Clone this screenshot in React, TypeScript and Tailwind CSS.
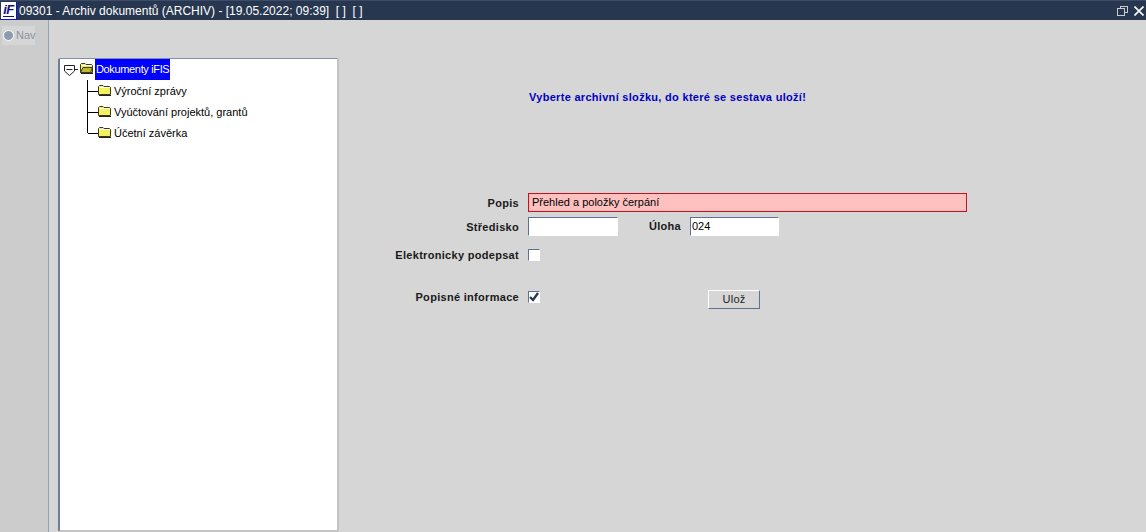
import type { ReactNode } from "react";

function Folder({ open = false }: { open?: boolean }) {
  return (
    <svg width="13" height="11" viewBox="0 0 13 11" className="shrink-0 -mt-[3px]">
      <path d="M0.5 9.5V1.5L1.5 0.5H5L6 1.5H11.5L12.5 2.5V9.5Z" fill={open ? "#f4ec50" : "#f4f060"} stroke="#3a3a20" strokeWidth="1" />
      <path d="M1 10H13V11H1Z" fill="#222" />
      <path d="M1.5 2.5H11.5" stroke="#ffffff" strokeWidth="1" />
      {open && <path d="M0.5 9.5L3 4.5H12.5L10.5 9.5Z" fill="#c2b830" stroke="#3a3a20" strokeWidth="1" />}
    </svg>
  );
}

function TreeRow({ label }: { label: string }) {
  return (
    <div className="flex items-center h-[21px]">
      <div className="w-2.5 h-px bg-black shrink-0" />
      <Folder />
      <span className="ml-[3px] text-black whitespace-nowrap">{label}</span>
    </div>
  );
}

function Label({ children }: { children: ReactNode }) {
  return <div className="w-[140px] shrink-0 text-right font-bold leading-[12px] text-[#1a1a1a] tracking-[0.3px] whitespace-nowrap">{children}</div>;
}

const inset = "border border-t-[#5d7290] border-l-[#5d7290] border-r-white border-b-white bg-white";

export default function App() {
  return (
    <div className="w-[1146px] h-[532px] overflow-hidden flex flex-col bg-[#d6d6d6] text-[11px] font-['Liberation_Sans',Arial,sans-serif]">
      <div className="h-5 shrink-0 flex items-center bg-[#283750] text-white text-[12px] border-t border-[#3c4c66]">
        <div className="w-[16px] h-[18px] ml-px bg-white border-r border-b border-[#1010d0] flex flex-col items-center justify-center">
          <span className="text-[#10107a] font-bold italic text-[13px] leading-[12px] tracking-[-0.5px] border-b border-[#10107a]">iF</span>
        </div>
        <span className="ml-[2px] whitespace-nowrap">09301 - Archiv dokumentů (ARCHIV) - [19.05.2022; 09:39]&nbsp; [ ]&nbsp; [ ]</span>
        <div className="ml-auto flex items-center gap-[6px] mr-[2px]">
          <svg width="11" height="10" viewBox="0 0 11 10" fill="none" stroke="#c8ccd2" strokeWidth="1">
            <rect x="3.5" y="0.5" width="7" height="6" />
            <rect x="0.5" y="2.5" width="7" height="7" fill="#283750" />
          </svg>
          <svg width="10" height="10" viewBox="0 0 10 10" stroke="#ffffff" strokeWidth="1.6">
            <path d="M0.5 0.5L9.5 9.5M9.5 0.5L0.5 9.5" />
          </svg>
        </div>
      </div>

      <div className="flex-1 flex min-h-0">
        <div className="w-[49px] shrink-0 bg-[#cccccc] border-r border-[#8fa3bd] pl-[2px] pt-[6px]">
          <div className="w-[33px] h-[19px] bg-[#d6d6d6] flex items-center gap-[2px] pl-px text-[#8a94a3]">
            <div className="w-[11px] h-[11px] rounded-full bg-[#8b9bb0] border border-white shrink-0" />
            <span>Nav</span>
          </div>
        </div>

        <div className="flex-1 flex min-w-0 pl-[9px] pt-[38px]">
          <div className="w-[281px] h-[474px] shrink-0 bg-white border-l-2 border-t border-b-2 border-r-2 border-l-[#6b7f9c] border-t-[#7f90a8] border-b-[#c4c4c4] border-r-[#c4c4c4] rounded-[2px] pl-[3px]">
            <div className="flex items-center h-[21px]">
              <svg width="15" height="14" viewBox="0 0 15 14" fill="none" stroke="#222" strokeWidth="1" className="shrink-0">
                <path d="M1.5 2.5H11.5V8L6.5 12.5L1.5 8Z" />
                <path d="M3.5 6.5H9.5M11.5 6.5H15" />
              </svg>
              <div className="ml-[2px] flex items-center">
                <Folder open />
              </div>
              <span className="ml-[2px] h-[21px] px-px bg-[#0000ff] text-white flex items-center whitespace-nowrap tracking-[-0.35px]">Dokumenty iFIS</span>
            </div>
            <div className="ml-[24px] border-l border-black h-[53px] pt-px">
              <TreeRow label="Výroční zprávy" />
              <TreeRow label="Vyúčtování projektů, grantů" />
              <TreeRow label="Účetní závěrka" />
            </div>
          </div>

          <div className="flex-1 min-w-0 flex flex-col pl-[40px]">
            <div className="ml-[150px] mt-[33px] h-[13px] leading-[13px] font-bold text-[#0000c0] tracking-[0.3px] whitespace-nowrap">
              Vyberte archivní složku, do které se sestava uloží!
            </div>
            <div className="mt-[89px] flex items-center h-[19px]">
              <Label>Popis</Label>
              <div className="ml-[9px] w-[439px] h-[19px] border border-[#c8101c] bg-[#ffc0c0] pl-[3px] flex items-center text-black">Přehled a položky čerpání</div>
            </div>
            <div className="mt-[5px] flex items-center h-[19px]">
              <Label>Středisko</Label>
              <div className={`ml-[9px] w-[90px] h-[19px] ${inset}`} />
              <div className="w-[63px] text-right font-bold text-[#1a1a1a] tracking-[0.3px]">Úloha</div>
              <div className={`ml-[9px] w-[89px] h-[19px] pl-[1px] flex items-center text-black ${inset}`}>024</div>
            </div>
            <div className="mt-[13px] flex items-center h-[12px]">
              <Label>Elektronicky podepsat</Label>
              <div className={`ml-[9px] w-[12px] h-[12px] ${inset}`} />
            </div>
            <div className="mt-[30px] flex items-start h-[19px]">
              <Label>Popisné informace</Label>
              <div className={`ml-[9px] w-[12px] h-[12px] flex items-center justify-center ${inset}`}>
                <svg width="10" height="10" viewBox="0 0 10 10" fill="none" stroke="#2b3a52" strokeWidth="2.4" className="shrink-0">
                  <path d="M1 5L4 8L9 1" />
                </svg>
              </div>
              <button className="ml-[168px] -mt-px w-[52px] h-[19px] bg-[#d6d6d6] border border-t-white border-l-white border-r-[#5d7290] border-b-[#5d7290] text-[#222] flex items-center justify-center tracking-[0.3px]">Ulož</button>
            </div>
          </div>
        </div>
      </div>
    </div>
  );
}
